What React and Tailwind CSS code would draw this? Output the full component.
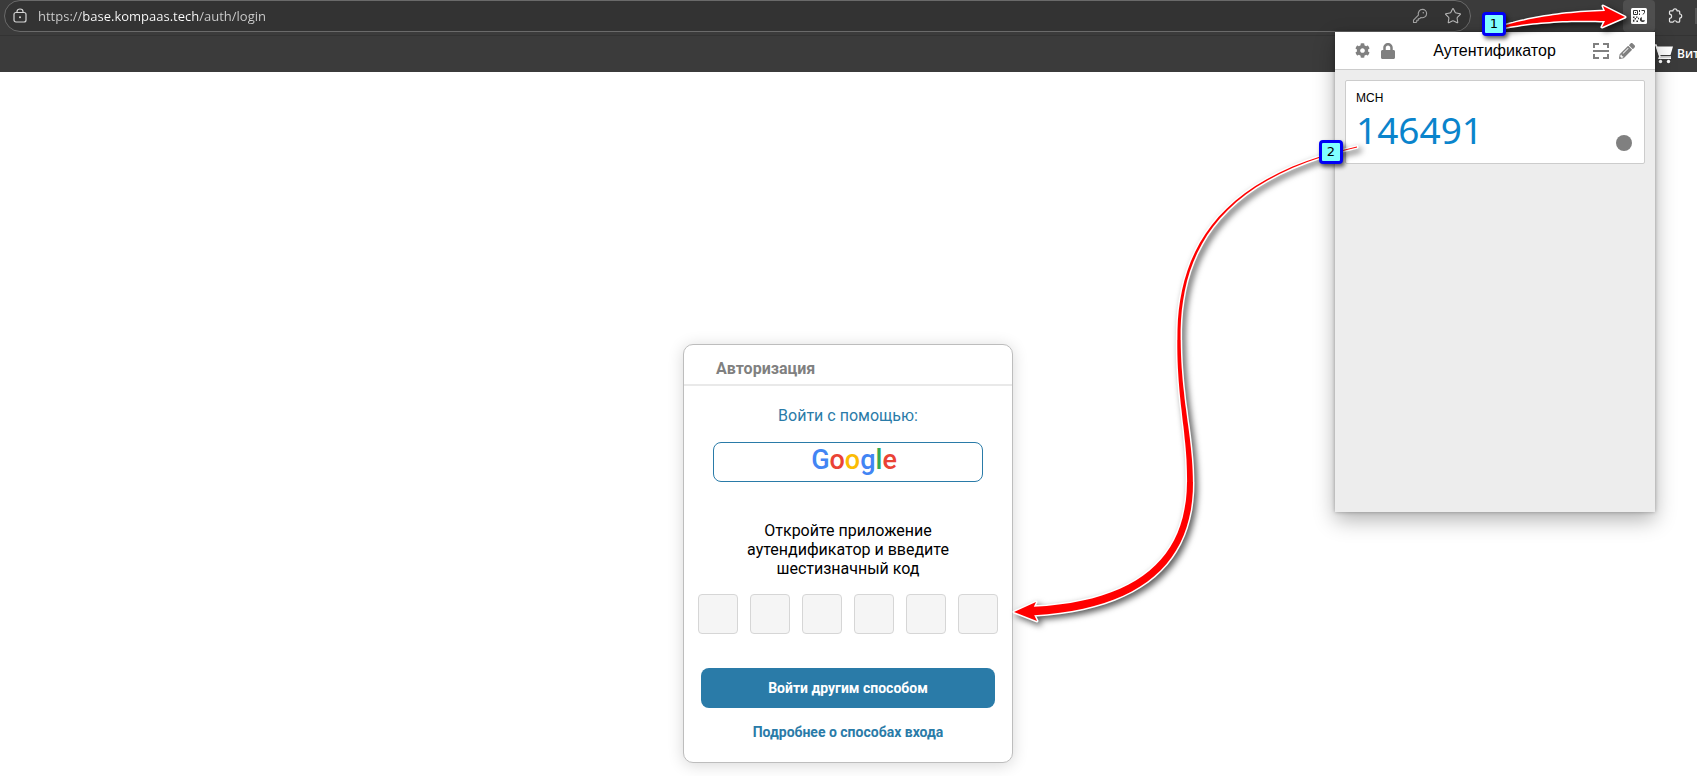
import React from "react";
import { FaCog, FaLock, FaPencilAlt } from "react-icons/fa";
import { Star } from "lucide-react";

// Builds the outline of a tapered arrow along a chain of cubic Béziers.
function taperedArrow(curves, startWidth, endWidth, head) {
  const points = [];
  curves.forEach(([p0, p1, p2, p3]) => {
    for (let i = 0; i <= 24; i++) {
      const t = i / 24;
      const u = 1 - t;
      const at = (k) => u * u * u * p0[k] + 3 * u * u * t * p1[k] + 3 * u * t * t * p2[k] + t * t * t * p3[k];
      const slope = (k) => u * u * (p1[k] - p0[k]) + 2 * u * t * (p2[k] - p1[k]) + t * t * (p3[k] - p2[k]);
      const dx = slope(0);
      const dy = slope(1);
      const length = Math.hypot(dx, dy);
      points.push({ x: at(0), y: at(1), nx: -dy / length, ny: dx / length });
    }
  });
  const left = [];
  const right = [];
  points.forEach(({ x, y, nx, ny }, i) => {
    const w = (startWidth + ((endWidth - startWidth) * i) / (points.length - 1)) / 2;
    left.push(`${(x + nx * w).toFixed(1)} ${(y + ny * w).toFixed(1)}`);
    right.unshift(`${(x - nx * w).toFixed(1)} ${(y - ny * w).toFixed(1)}`);
  });
  // The head's first barb lies on the same side as the left edge.
  return `M${[...left, ...head, ...right].join("L")}Z`;
}

const extensionArrow = taperedArrow(
  [[[503, 27], [530, 20], [565, 16], [605, 16]]],
  2,
  10,
  ["602 27", "625 17", "603 6"]
);

const codeArrow = taperedArrow(
  [
    [[357, 147], [210, 180], [178, 260], [179, 340]],
    [[179, 340], [179, 400], [190, 435], [190, 482]],
    [[190, 482], [190, 560], [140, 605], [34, 611]],
  ],
  0.8,
  8.5,
  ["36 602", "14 612", "37 621"]
);

function LockOutline() {
  return (
    <svg viewBox="0 0 14 16" className="h-4 w-3.5 shrink-0" fill="none" stroke="#d6d6d6" strokeWidth="1.2" aria-hidden="true">
      <rect x="1" y="4.500" width="12" height="9.500" rx="2" />
      <path d="M4 4.500V3.500C4 2 5.300 1 7 1s3 1 3 2.500v1" />
      <circle cx="7" cy="9.300" r="1" fill="#d6d6d6" stroke="none" />
    </svg>
  );
}

function KeyOutline() {
  return (
    <svg viewBox="0 0 16 16" className="size-4" fill="none" stroke="#a3a3a3" strokeWidth="1.1" strokeLinejoin="round" aria-hidden="true">
      <path d="M6.4 7.2C5.7 4 7.6 1.400 10.500 1.400c2.300 0 4.100 1.800 4.100 4.100 0 2.900-2.600 4.800-5.800 4.100L7.700 10.700H6.300v1.500H4.800v1.500l-.8.8H1.500v-2.400z" />
      <circle cx="11.300" cy="4.700" r=".8" fill="#a3a3a3" stroke="none" />
    </svg>
  );
}

function QrIcon() {
  return (
    <svg viewBox="0 0 16 16" className="size-4" aria-hidden="true">
      <rect width="16" height="16" rx="1.500" fill="#fff" />
      <g fill="none" stroke="#333" strokeWidth="1">
        <path d="M2.500 2.500h4v4h-4zM8.500 2v2M8.500 5.500v1.500M10.500 2.500h3v2l-1.500 2" />
      </g>
      <g fill="#333">
        <path d="M4 4h1v1H4zM2 8.500h1.500V10H2zM5 8.500h1.500v1.300H5zM3.600 10h1.400v1.400H3.600zM2 11.800h1.400v2H2zM5.400 12.500H7V14H5.400zM7 9.800h1v1.400H7z" />
        <path d="M10.800 9a2.600 2.600 0 1 0 3.200 3.200h-3.200z" />
      </g>
    </svg>
  );
}

function PuzzleOutline() {
  return (
    <svg viewBox="0 0 16 16" className="size-4" fill="none" stroke="#e5e5e5" strokeWidth="1.200" strokeLinejoin="round" aria-hidden="true">
      <path d="M3.500 2.800H6a2 2 0 0 1 4 0h1.700a1 1 0 0 1 1 1V6a2 2 0 0 1 0 4v3.200a1 1 0 0 1-1 1H9.800a1.900 1.900 0 0 0-3.700 0H3.500a1 1 0 0 1-1-1V10.300a2.100 2.100 0 0 0 0-4.200V3.800a1 1 0 0 1 1-1z" />
    </svg>
  );
}

function CartIcon() {
  return (
    <svg viewBox="0 0 20 20" className="size-5 shrink-0" aria-hidden="true">
      <path d="M0 1h3l4 12h11" fill="none" stroke="#fff" strokeWidth="1.600" />
      <path d="M3 2.500h17L17.500 11H5.800z" fill="#fff" />
      <path d="M7 11.500 6 14.300h12" fill="none" stroke="#fff" strokeWidth="1.300" />
      <circle cx="7.500" cy="17.500" r="1.700" fill="#fff" />
      <circle cx="15.500" cy="17.500" r="1.700" fill="#fff" />
    </svg>
  );
}

function ScanIcon() {
  return (
    <svg viewBox="0 0 16 16" className="size-4" fill="none" stroke="#808080" strokeWidth="2" aria-hidden="true">
      <path d="M1 5V1h5M10 1h5v4M15 11v4h-5M6 15H1v-4M0 8h16" />
    </svg>
  );
}

function BrowserBar() {
  return (
    <header className="overflow-hidden bg-[#3b3b3b]">
      <div className="flex h-9 items-start border-b border-[#333333] pl-1">
        <div className="flex h-8 min-w-0 flex-1 items-center rounded-full border border-[#6a6a6a] bg-[#333333] px-2">
          <LockOutline />
          <input
            type="url"
            aria-label="Адрес сайта"
            defaultValue="https://base.kompaas.tech/auth/login"
            className="ml-[11px] min-w-0 flex-1 bg-[linear-gradient(90deg,#d0d0d0_45px,#ffffff_45px,#ffffff_161px,#d0d0d0_161px)] bg-clip-text font-['Open_Sans',sans-serif] text-[13px] leading-5 text-transparent outline-none"
          />
          <div className="flex items-center gap-4">
            <button type="button" aria-label="Пароли"><KeyOutline /></button>
            <button type="button" aria-label="В избранное">
              <Star className="size-[18px] text-[#b8b8b8]" strokeWidth={1.4} />
            </button>
          </div>
        </div>
        <div className="ml-38 flex h-8 items-center">
          <button type="button" aria-label="Аутентификатор" className="flex h-8 w-8 items-center justify-center rounded-sm bg-[#4f4f4f]">
            <QrIcon />
          </button>
          <button type="button" aria-label="Расширения" className="ml-3 flex h-8 items-center"><PuzzleOutline /></button>
          <span className="ml-3 h-4 w-0.5 bg-[#565656]" />
        </div>
      </div>
      <nav className="flex h-9 items-center justify-end">
        <a href="#shop" className="flex w-11 items-center gap-1 overflow-hidden whitespace-nowrap font-['Open_Sans',sans-serif] text-xs font-semibold text-white">
          <CartIcon />
          Вит
        </a>
      </nav>
    </header>
  );
}

function LoginCard() {
  return (
    <section className="mx-auto w-[330px] rounded-[10px] border border-[#bdbdbd] bg-white pb-5 text-center shadow-[0_2px_16px_rgba(0,0,0,0.16)]">
      <h1 className="border-b-2 border-[#e9e9e9] pt-3 pb-1 pl-8 text-left text-base leading-[23px] font-bold text-[#808080]">
        Авторизация
      </h1>
      <p className="mt-5 text-base leading-5 text-[#2a7ba8]">Войти с помощью:</p>
      <button
        type="button"
        aria-label="Google"
        className="mx-auto mt-4 flex h-10 w-[270px] items-center justify-center rounded-lg border border-[#2a7ba8] bg-white pb-1 pl-3 text-[27px] leading-8 font-medium"
      >
        <span className="text-[#4285f4]">G</span>
        <span className="text-[#ea4335]">o</span>
        <span className="text-[#fbbc05]">o</span>
        <span className="text-[#4285f4]">g</span>
        <span className="text-[#34a853]">l</span>
        <span className="text-[#ea4335]">e</span>
      </button>
      <p className="mx-auto mt-[39px] w-56 text-base leading-[19px] text-black">
        Откройте приложение аутендификатор и введите шестизначный код
      </p>
      <div className="mt-4 flex justify-center gap-3">
        {[1, 2, 3, 4, 5, 6].map((n) => (
          <input
            key={n}
            type="text"
            inputMode="numeric"
            maxLength={1}
            aria-label={`Цифра ${n}`}
            className="size-10 rounded border border-[#d6d6d6] bg-[#f5f5f5] text-center"
          />
        ))}
      </div>
      <button type="button" className="mt-[34px] h-10 w-[294px] rounded-lg bg-[#2a7ba8] text-sm font-bold text-white">
        Войти другим способом
      </button>
      <a href="#methods" className="mx-auto mt-3.5 block w-fit text-sm font-bold text-[#2a7ba8]">
        Подробнее о способах входа
      </a>
    </section>
  );
}

function AuthenticatorPopup() {
  return (
    <aside className="absolute top-8 right-[42px] h-[480px] w-80 bg-[#ededed] font-['Liberation_Sans',sans-serif] shadow-[0_8px_20px_rgba(0,0,0,0.3),0_0_4px_rgba(0,0,0,0.3)]">
      <div className="flex h-[38px] items-center justify-between border-b border-[#cccccc] bg-white px-5 text-[#808080]">
        <div className="flex items-center gap-2.5">
          <button type="button" aria-label="Настройки"><FaCog className="size-[15px]" /></button>
          <button type="button" aria-label="Безопасность"><FaLock className="size-4" /></button>
        </div>
        <h2 className="text-base text-black">Аутентификатор</h2>
        <div className="flex items-center gap-2.5">
          <button type="button" aria-label="Сканировать QR-код"><ScanIcon /></button>
          <button type="button" aria-label="Изменить"><FaPencilAlt className="size-4" /></button>
        </div>
      </div>
      <div className="mx-2.5 mt-2.5 flex h-[84px] items-end justify-between rounded-xs border border-[#cccccc] bg-white pr-3 pb-3 pl-2.5">
        <div className="self-start pt-2">
          <p className="text-xs leading-[18px] text-black">MCH</p>
          <p className="font-['Noto_Sans',sans-serif] text-[37px] leading-[46px] text-[#0a84cc]">146491</p>
        </div>
        <span className="size-4 rounded-full bg-[#808080]" />
      </div>
    </aside>
  );
}

function StepBadge({ number, className }) {
  return (
    <span
      className={`absolute flex size-6 items-center justify-center rounded border-[3px] border-[#0000f5] bg-[#80ffff] font-['DejaVu_Sans',sans-serif] text-[13px] text-black shadow-[2px_3px_4px_rgba(0,0,0,0.6)] ${className}`}
    >
      {number}
    </span>
  );
}

function Annotations() {
  return (
    <div className="pointer-events-none absolute top-0 right-0 h-[640px] w-[697px]">
      <svg
        viewBox="0 0 697 640"
        className="h-full w-full drop-shadow-[3px_3px_3px_rgba(0,0,0,0.65)]"
        fill="#ff0000"
        stroke="#ffffff"
        strokeWidth="3"
        strokeLinejoin="round"
        style={{ paintOrder: "stroke" }}
        aria-hidden="true"
      >
        <path d={extensionArrow} />
        <path d={codeArrow} />
      </svg>
      <StepBadge number="1" className="top-3 right-[191px]" />
      <StepBadge number="2" className="top-[140px] right-[354px]" />
    </div>
  );
}

export default function App() {
  return (
    <div className="relative min-h-screen overflow-hidden bg-white font-['Roboto',sans-serif]">
      <BrowserBar />
      <main className="pt-68 pr-px">
        <LoginCard />
      </main>
      <AuthenticatorPopup />
      <Annotations />
    </div>
  );
}
